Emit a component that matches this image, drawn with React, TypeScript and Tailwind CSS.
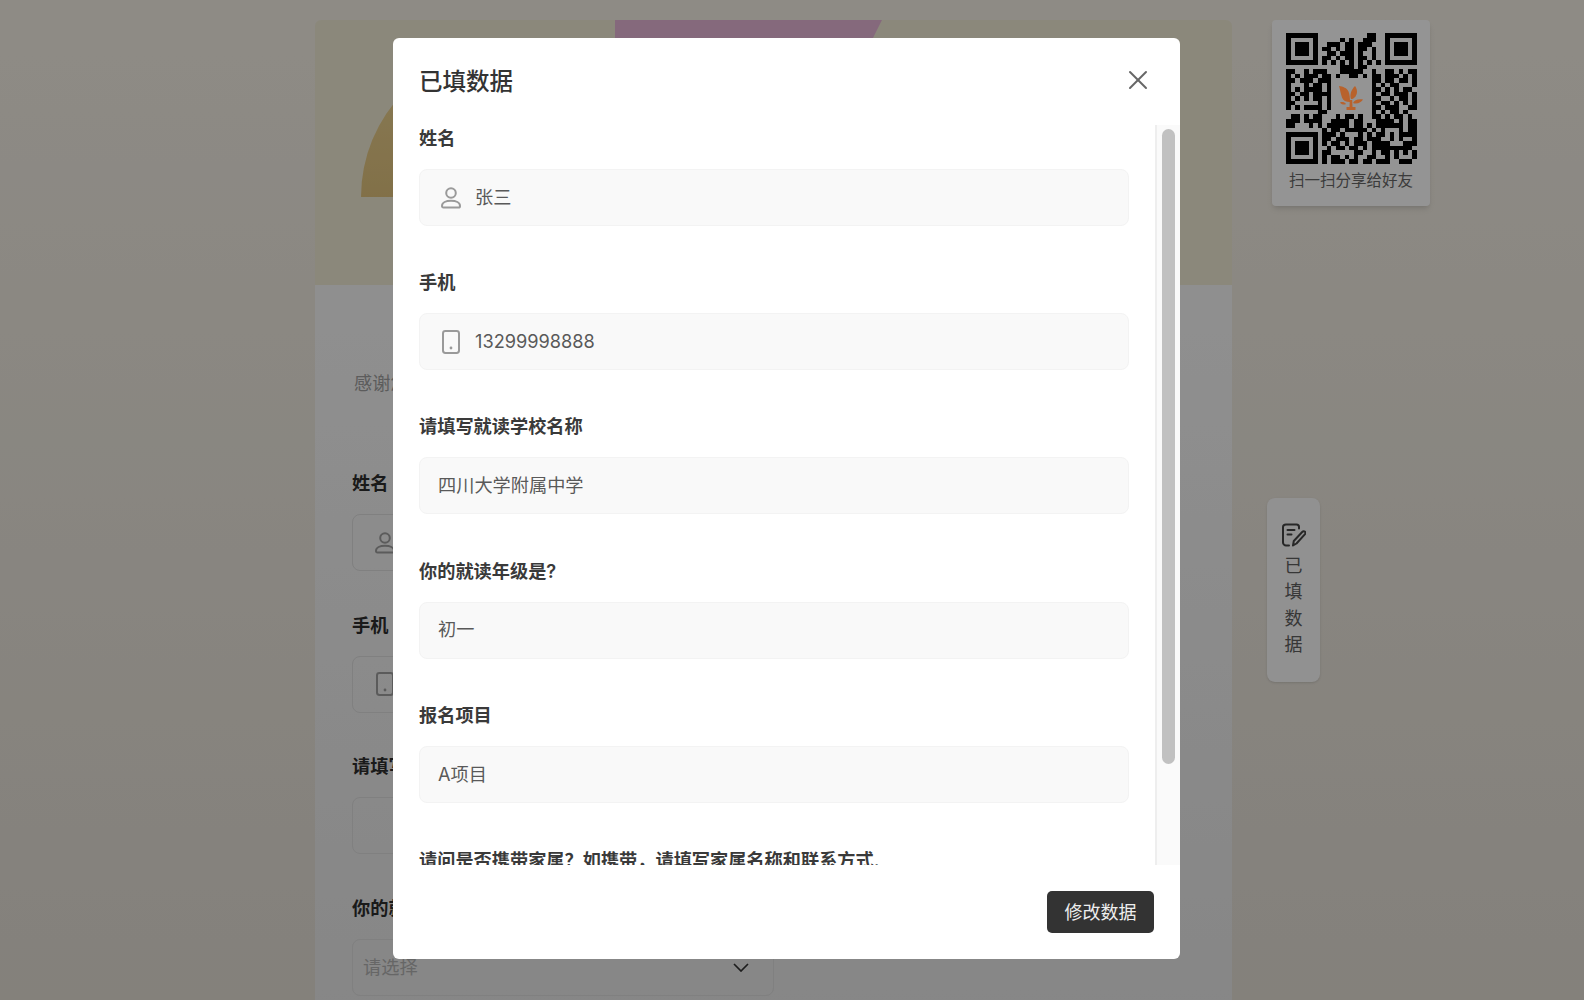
import { X } from 'lucide-react'

// 29x29 share code, logo sits in the cleared middle
const QR_ROWS = [
  '#######...........##..#######',
  '#.....#.....#.#..###..#.....#',
  '#.###.#..###.##.###...#.###.#',
  '#.###.#.##.#.##.##.#..#.###.#',
  '#.###.#..##.###.#..#..#.###.#',
  '#.....#.##.#.##.##.#..#.....#',
  '#######.#.#.#.#.#.#.#.#######',
  '............###.##...........',
  '##..#.###...#####..#..##.#.##',
  '#.#.###.##.#..##.#.##.###.#.#',
  '##.###.###.........##.##.##.#',
  '#...#.##.#.........#.#.##...#',
  '#.#.####.#.........##.#.#.##.',
  '##.##.####.........#.##.###.#',
  '#.#.#.##.#.........##..#.##.#',
  '##.....#.#.........#.##.#.#.#',
  '#.#.####.#.........##.###..##',
  '.......##..........#.#.##.#..',
  '.##.#.##...#.##.#..##.#.##.#.',
  '###.####..####.##...####.#.##',
  '##...#.#.#####.##.#.######.##',
  '........#.##.#####.#.#...#.##',
  '#######.###.#...#.#.##.#.####',
  '#.....#.##.###.##.###..#.#..#',
  '#.###.#.#.##.#.###.####...###',
  '#.###.#..#.##.##.#.#########.',
  '#.###.#.##.....##..#.##.#.#.#',
  '#.....#.#.##.#.#..##..#.#...#',
  '#######.#.###.##.##.###..###.',
]

const FIELDS = [
  { label: '姓名', value: '张三', icon: 'user' },
  { label: '手机', value: '13299998888', icon: 'phone' },
  { label: '请填写就读学校名称', value: '四川大学附属中学' },
  { label: '你的就读年级是?', value: '初一' },
  { label: '报名项目', value: 'A项目' },
]

function UserIcon({ className }: { className?: string }) {
  return (
    <svg viewBox="0 0 20 22" fill="none" stroke="currentColor" strokeWidth="2" className={className}>
      <circle cx="10" cy="6" r="4.800" />
      <path d="M1 19C1 15.600 5 13.800 10 13.800s9 1.800 9 5.200c0 1-.6 1.600-1.400 1.600H2.400C1.600 20.600 1 20 1 19z" />
    </svg>
  )
}

function PhoneIcon({ className }: { className?: string }) {
  return (
    <svg viewBox="0 0 18 24" fill="none" stroke="currentColor" strokeWidth="2" className={className}>
      <rect x="1" y="1" width="16" height="22" rx="2.400" />
      <circle cx="9" cy="18" r="1.400" fill="currentColor" stroke="none" />
    </svg>
  )
}

function Field({ label, value, icon }: { label: string; value: string; icon?: string }) {
  return (
    <div className="mb-[43.2px]">
      <div className="text-[18.2px] leading-[26px] font-semibold text-[#3a3a3a]">{label}</div>
      <div className="mt-[18px] flex h-[57px] items-center rounded-lg border border-[#f3f3f3] bg-[#f9f9f9] pl-[18px] text-[18.2px] text-[#595959]">
        {icon === 'user' && <UserIcon className="ml-[3px] mr-[14px] h-[22px] w-5 text-[#9a9a9a]" />}
        {icon === 'phone' && <PhoneIcon className="ml-[4px] mr-[15px] h-[24px] w-[18px] text-[#9a9a9a]" />}
        {value}
      </div>
    </div>
  )
}

function BackgroundField({ label, icon, placeholder }: { label: string; icon?: string; placeholder?: string }) {
  return (
    <div className="mb-[39.600px]">
      <div className="text-[18.2px] leading-[28px] font-semibold text-[#2d2d2d]">{label}</div>
      <div className="mt-[17px] flex h-[57px] w-[422px] items-center justify-between rounded-lg border border-[#dcdcdc] px-[10px] text-[18.2px] text-[#b0b0b0]">
        {icon === 'user' && <UserIcon className="ml-[12px] h-[22px] w-5 text-[#9d9d9d]" />}
        {icon === 'phone' && <PhoneIcon className="ml-[13px] h-[24px] w-[18px] text-[#9d9d9d]" />}
        {placeholder}
        {placeholder && (
          <svg viewBox="0 0 16 9" fill="none" stroke="#333" strokeWidth="1.7" className="mr-[14px] h-[9px] w-4">
            <path d="M1 1l7 7 7-7" />
          </svg>
        )}
      </div>
    </div>
  )
}

function QrCode() {
  return (
    <svg viewBox="0 0 29 29" shapeRendering="crispEdges" className="h-[131px] w-[131px]">
      {QR_ROWS.map((row, y) =>
        row.split('').map((c, x) => (c === '#' ? <rect key={`${x}-${y}`} x={x} y={y} width="1" height="1" fill="#000" /> : null)),
      )}
    </svg>
  )
}

function TreeLogo({ className }: { className?: string }) {
  return (
    <svg viewBox="0 0 24 25" fill="#b8622c" className={className}>
      <path d="M11 17c-4 0-7-1.500-8-4.500C1.500 8 1 4 0 1c4 .5 8 2 9.500 5.500 1 2.500 1.500 6 1.500 10.500z" />
      <path d="M12 14c-1.500-4 0-9 4-13 2.500 3.500 3 8-.5 11.500-1 1-2.200 1.500-3.500 1.500z" />
      <path d="M14 18c1-2.500 5-4.500 10-3.500-1.500 3-6 5-10 3.500z" />
      <path d="M7 19c-2 1.200-4.500.5-6-1.500 2-.8 4.500-.5 6 1.500z" />
      <path d="M10.800 15h2.400l.3 7h3v3H7.500v-3h3z" />
    </svg>
  )
}

function NoteIcon({ className }: { className?: string }) {
  return (
    <svg viewBox="0 0 24 24" fill="none" stroke="currentColor" strokeWidth="2" strokeLinecap="round" strokeLinejoin="round" className={className}>
      <path d="M17 5.500V4c0-1.500-1-2.500-2.500-2.500H4C2.500 1.500 1 2.500 1 4v15.500C1 21 2.500 22.500 4 22.500h3" />
      <path d="M5.500 7h7M5.500 11.500h4" />
      <path d="M11 22.500l.8-4.500 8.400-9c1-1 2-1 2.800-.2.800.8.600 1.800-.2 2.600l-8.300 9.100z" />
    </svg>
  )
}

export default function App() {
  return (
    <div className="relative flex h-screen overflow-hidden bg-gradient-to-b from-[#f5f0e6] to-[#e3ded5] pl-[315px] font-['Inter','Noto_Sans_CJK_SC',sans-serif]">
      {/* page behind the dialog */}
      <div className="mt-5 w-[917px]">
        <div className="relative h-[265px] overflow-hidden rounded-t-md bg-[#f0ebd5]">
          <svg viewBox="0 0 917 265" className="h-full w-full">
            <defs>
              <linearGradient id="gold" x1="0" y1="0" x2="0" y2="1">
                <stop offset="0" stopColor="#ecd494" />
                <stop offset="1" stopColor="#e0c27d" />
              </linearGradient>
            </defs>
            <path d="M46 177A150 150 0 0 1 346 177Z" fill="url(#gold)" />
            <path d="M300 0H567L558 18H300Z" fill="#e6b6d6" />
          </svg>
        </div>
        <div className="h-[800px] bg-gradient-to-b from-[#f7f7f7] to-[#e6e6e6] pl-[37px]">
          <p className="pl-[2px] pt-[84px] text-[18.2px] leading-[28px] text-[#9f9f9f]">感谢您的参与</p>
          <div className="mt-[72px]">
            <BackgroundField label="姓名" icon="user" />
            <BackgroundField label="手机" icon="phone" />
            <BackgroundField label="请填写就读学校名称" />
            <BackgroundField label="你的就读年级是?" placeholder="请选择" />
          </div>
        </div>
      </div>

      {/* right side tools */}
      <div className="ml-[35px] flex flex-col items-start pt-5">
        <div className="ml-[5px] flex h-[186px] w-[158px] flex-col items-center rounded-sm bg-white pt-[13px] shadow-md">
          <QrCode />
          <div className="mt-[7px] whitespace-nowrap text-[15.5px] leading-[20px] text-[#666]">扫一扫分享给好友</div>
        </div>
        <div className="mt-[292px] flex h-[184px] w-[53px] flex-col items-center rounded-lg bg-[#fafafa] pt-[25px] text-[18px] leading-[26.3px] text-[#5f5f5f] shadow-sm">
          <NoteIcon className="mb-[6px] h-6 w-6 text-[#444]" />
          <span>已</span>
          <span>填</span>
          <span>数</span>
          <span>据</span>
        </div>
      </div>

      {/* dialog */}
      <div className="absolute inset-0 bg-black/[0.42] pl-[393px] pt-[38px]">
        <div className="flex h-[921px] w-[787px] flex-col rounded-md bg-white">
          <div className="flex h-[87px] shrink-0 items-center justify-between pb-[3px] pl-[26px] pr-[26px]">
            <h2 className="pt-1 text-[23.5px] font-medium text-[#333]">已填数据</h2>
            <X className="h-8 w-8 text-[#666]" strokeWidth={1.5} />
          </div>
          <div className="flex h-[740px] shrink-0 overflow-hidden">
            <div className="min-w-0 flex-1 pl-[26px] pr-[26px]">
              {FIELDS.map((f) => (
                <Field key={f.label} label={f.label} value={f.value} icon={f.icon} />
              ))}
              <div className="whitespace-nowrap text-[18.2px] leading-[28px] font-semibold text-[#3a3a3a]">
                {'请问是否携带家属\uFF1F如携带\uFF0C请填写家属名称和联系方式.'}
              </div>
            </div>
            <div className="w-[25px] shrink-0 border-l-2 border-[#eeeeee] bg-[#fafafa] pl-[5px] pt-1">
              <div className="h-[635px] w-[13px] rounded-full bg-[#c1c1c1]" />
            </div>
          </div>
          <div className="flex flex-1 items-center justify-end pr-[26px]">
            <button className="h-[42px] w-[107px] rounded-[5px] bg-[#333] text-[18px] text-[#eee]">修改数据</button>
          </div>
        </div>
      </div>

      {/* logo keeps its full colour in the reference */}
      <TreeLogo className="absolute left-[1339px] top-[85px] h-[25px] w-6" />
    </div>
  )
}
